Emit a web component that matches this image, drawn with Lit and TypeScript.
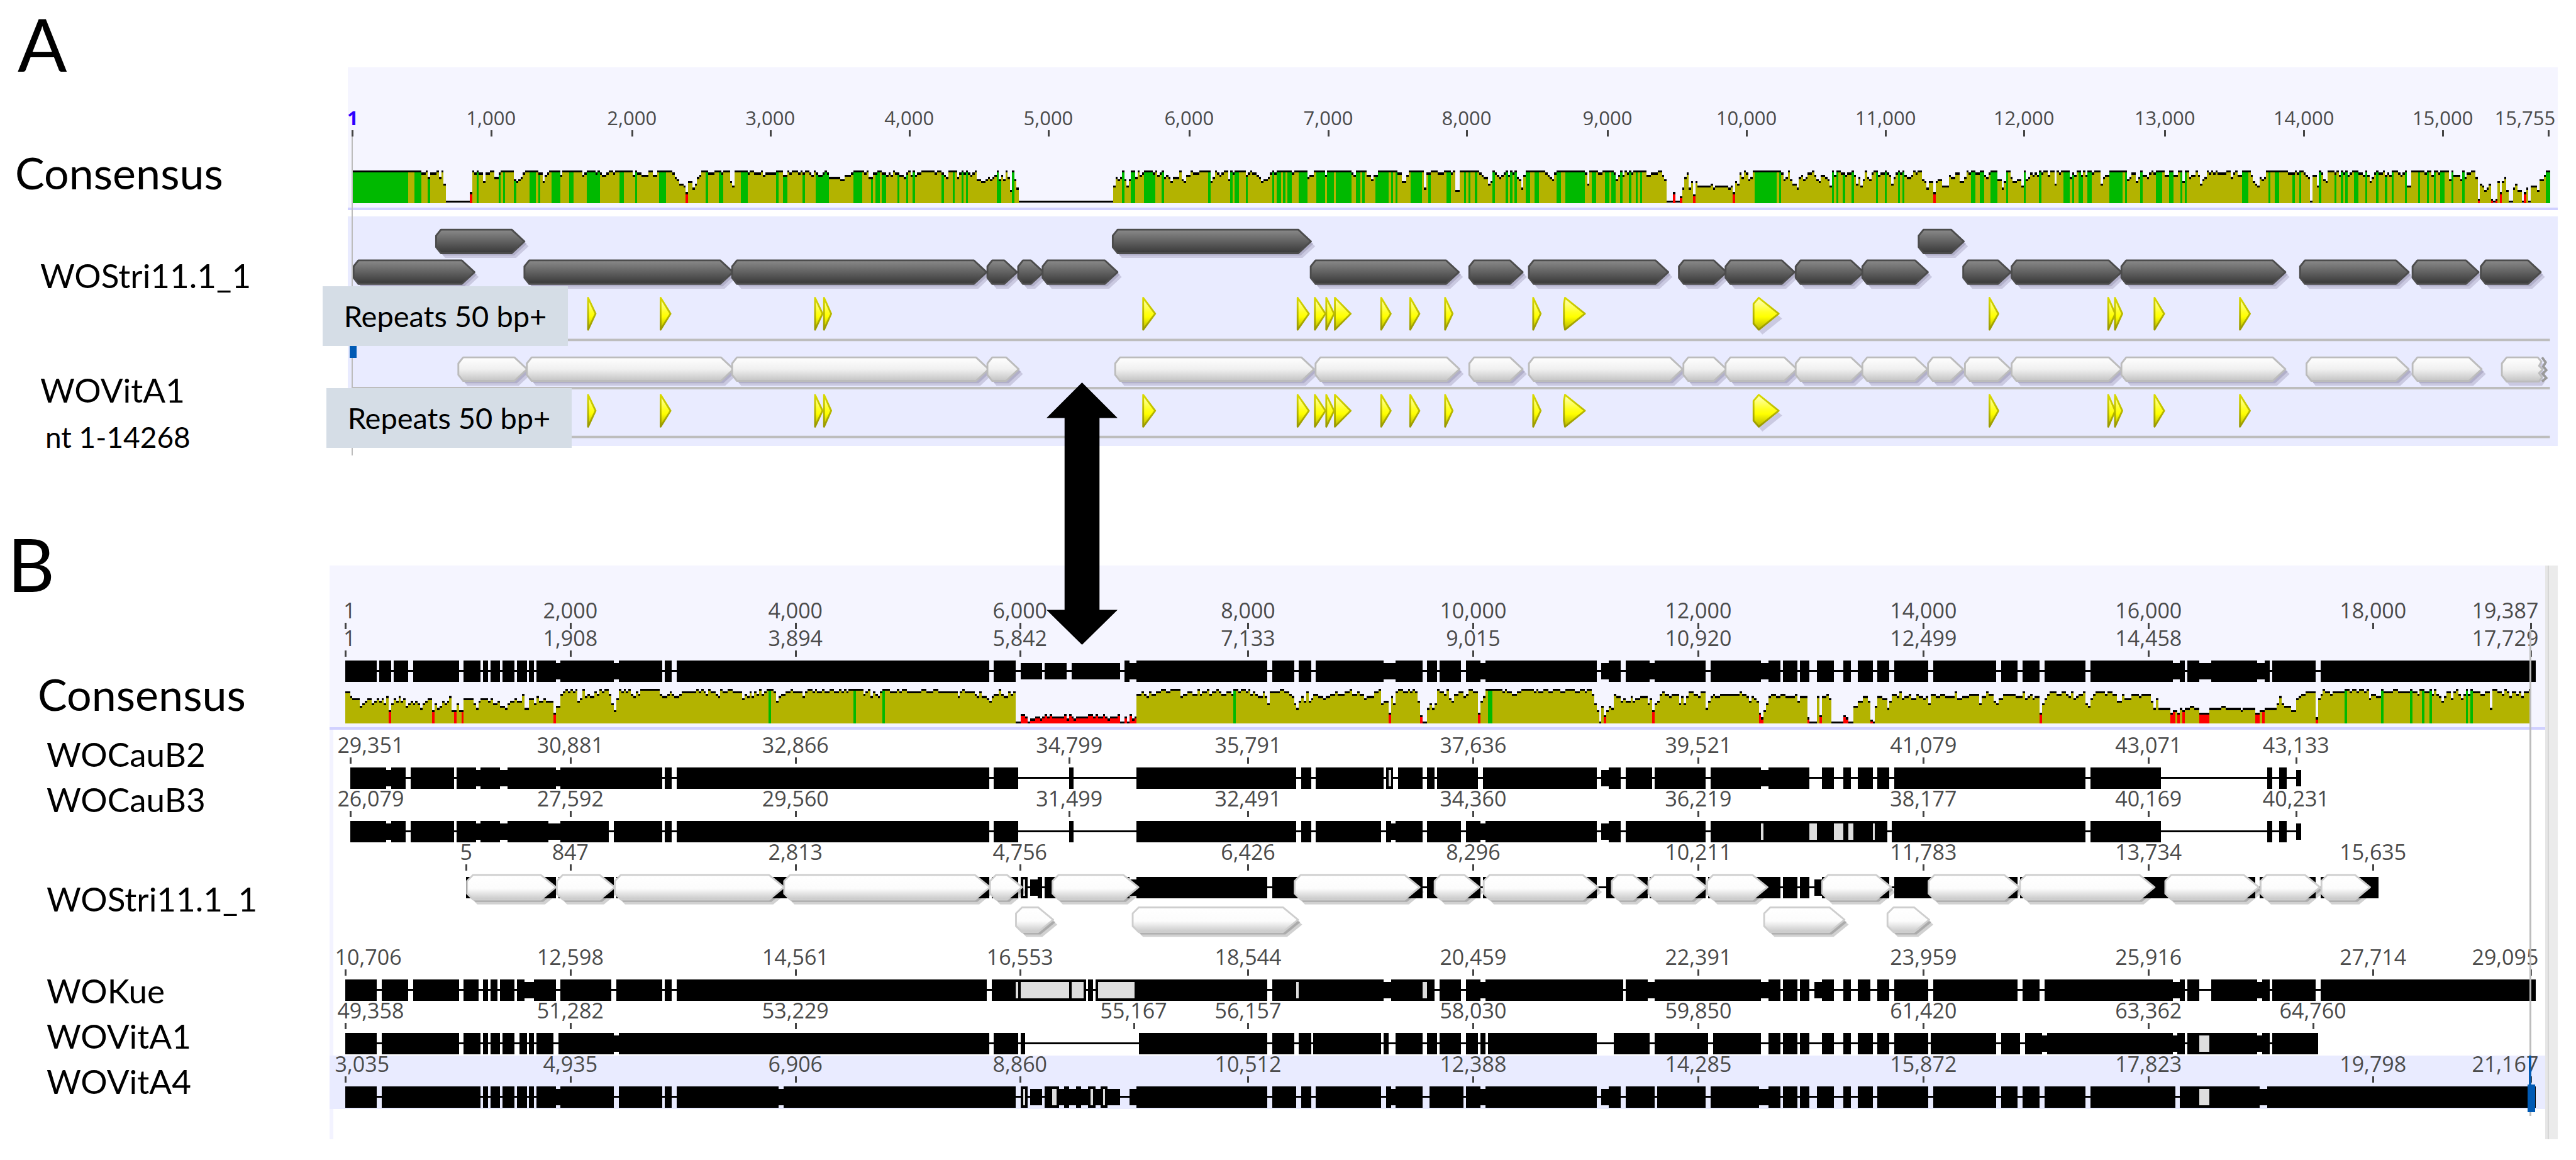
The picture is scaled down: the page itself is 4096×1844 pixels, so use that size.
import { LitElement, html, svg, css } from "lit";
import { customElement, property } from "lit/decorators.js";

type Span = [number, number];
type Tick = { at: number; text: string; start?: number; end?: number; strong?: boolean };
type Step = [number, number];

/* Features are listed window by window; a window has its own origin and pitch. */
const scan =
  (origin: number, pitch: number) =>
  (...spans: Span[]): Span[] =>
    spans.map(([a, b]) => [origin + a / pitch, origin + b / pitch]);

const steps =
  (origin: number, pitch: number) =>
  (text: string): Step[] =>
    text
      .trim()
      .split(/\s+/)
      .map((t) => {
        const [x, d] = t.split(":").map(Number);
        return [origin + x / pitch, d];
      });

const ticks = (xs: number[], texts: string[]): Tick[] => xs.map((at, i) => ({ at, text: texts[i] }));

const a0 = scan(0, 1.568);
const a1 = scan(900, 1.7422);
const a2 = scan(1750, 1.7422);
const a3 = scan(2600, 1.7422);
const a4 = scan(3400, 1.7818);
const b0 = scan(0, 1.568);
const b1 = scan(900, 1.7422);
const b2 = scan(1700, 1.7422);
const b3 = scan(2500, 1.7422);
const b4 = scan(3380, 1.7422);
const mid = scan(1680, 3);

/* ---------- panel A ---------- */

const A_LEFT = 578;
const A_WIDTH = 3672;

const A_TICKS: Tick[] = [
  { at: 585, text: "1", start: 577, strong: true },
  ...ticks(
    [816, 1050, 1280, 1511, 1742, 1976, 2207, 2437, 2671, 2902, 3133, 3363, 3597, 3828, 4059],
    ["1,000", "2,000", "3,000", "4,000", "5,000", "6,000", "7,000", "8,000", "9,000", "10,000", "11,000", "12,000", "13,000", "14,000", "15,000"],
  ),
  { at: 4234, text: "15,755", end: 4246 },
];

const A_PROFILE: Step[] = [
  ...steps(0, 1.568)(`920:0 1100:1 1107:0 1118:3 1123:1 1136:0 1142:3 1148:0 1153:6 1159:14 1222:10 1228:0 1235:1 1240:0
    1246:1 1256:5 1262:1 1275:0 1290:3 1297:1 1302:0 1308:1 1313:0 1340:4 1346:5 1352:4 1358:3 1364:1 1370:0 1404:1`),
  ...steps(900, 1.7422)(`0:1 6:5 12:2 18:1 25:0 57:2 63:0 115:2 121:4 127:1 130:0 153:1 160:0 166:1 172:0 178:2 185:1 192:0
    205:1 211:0 262:2 268:0 274:1 287:0 293:2 312:0 319:1 325:2 332:0 338:3 344:0 382:1 388:3 395:4 401:6 408:7 415:10
    421:6 427:5 434:8 440:6 447:3 453:5 459:2 465:0 484:1 498:0 517:1 523:0 542:5 549:7 555:1 561:0 593:1 600:0 606:1
    612:0 618:1 625:0 631:1 637:0 644:2 650:1 657:0 663:1 682:0 701:2 708:0 715:1 721:0 727:1 733:0 746:1 752:0 758:1
    765:0 772:1 784:2 790:0 797:1 803:2 810:0 816:1 822:0 829:1 835:3 842:0 848:3 861:4 874:0 880:2 893:7 899:1 905:0
    912:1 918:0 925:1 931:0 937:1 943:0 950:3 957:0 963:1 970:0 976:1 982:0 988:1 1001:2 1007:1 1014:2 1020:0 1026:1
    1039:2 1052:3 1058:1 1064:0 1071:2 1077:0 1083:2 1090:1 1103:0 1141:1 1147:0 1160:1 1166:2 1173:3 1179:0 1204:3
    1211:1 1217:0 1223:1 1230:0 1236:1 1242:2 1249:1 1255:0 1261:4 1274:5 1287:4 1293:3 1300:4 1306:3 1313:2 1319:0
    1325:4 1332:2 1338:4 1345:0 1351:3 1357:9 1364:0 1370:4 1376:8 1383:14`),
  ...steps(1750, 1.7422)(`0:14 177:7 183:3 190:4 196:3 202:0 209:4 215:7 221:4 228:0 241:3 247:0 253:2 260:1 266:0 291:1
    298:0 304:2 311:1 317:0 324:3 330:2 337:3 343:5 349:3 368:0 375:4 381:5 387:2 400:0 407:1 425:0 457:5 464:3 470:0
    476:1 483:2 490:1 496:0 503:3 509:4 515:0 522:1 528:0 560:2 566:1 573:0 579:1 590:2 597:3 604:5 611:4 624:3 630:1
    636:0 643:1 649:0 694:1 700:0 739:3 745:2 752:1 758:0 790:2 796:0 861:1 867:2 873:3 879:0 911:2 918:4 930:2 937:0
    1000:1 1007:3 1013:5 1020:6 1026:2 1032:0 1058:6 1064:0 1071:2 1077:8 1083:1 1090:0 1115:1 1134:0 1153:1 1160:0
    1166:9 1173:7 1179:0 1236:1 1243:2 1249:3 1256:4 1262:6 1268:5 1274:0 1280:1 1287:2 1294:3 1300:2 1306:1 1312:0
    1319:2 1325:0 1331:1 1338:0 1345:3 1351:4 1357:8 1364:2 1370:0 1425:1 1432:2 1438:3 1445:4 1451:1 1458:0`),
  ...steps(2600, 1.7422)(`0:0 61:1 67:6 74:0 95:1 112:0 144:1 150:4 157:2 163:0 169:2 176:0 182:1 188:0 195:1 201:0 240:2
    253:1 271:0 284:2 290:4 297:14 316:10 322:14 335:12 341:8 348:3 354:1 361:8 367:5 374:11 380:5 386:7 424:6 430:8
    437:7 475:8 482:7 488:10 495:5 501:6 508:1 514:3 520:0 527:1 533:4 539:3 546:0 629:1 635:4 641:3 647:0 654:4 660:6
    673:8 679:3 686:2 693:4 699:3 705:1 718:0 724:2 731:4 737:5 743:2 756:3 763:4 769:7 775:0 782:2 788:0 801:1 813:2
    820:1 833:0 840:2 845:6 852:3 858:7 864:4 870:0 876:3 883:4 890:1 896:0 909:2 915:1 928:0 935:1 941:2 948:6 954:3
    960:1 966:0 973:1 979:0 986:2 992:3 1005:2 1011:0 1017:1 1023:0 1036:4 1043:5 1050:8 1056:5 1069:10 1075:5 1082:4
    1094:7 1113:2 1119:3 1132:1 1145:5 1158:3 1164:0 1171:1 1177:0 1190:1 1203:0 1215:2 1222:3 1228:1 1234:0 1254:4
    1267:8 1273:5 1280:0 1287:1 1292:3 1299:5 1311:4 1324:7 1330:0 1336:4 1343:3 1349:1 1356:2 1362:1 1369:2 1375:0
    1381:1 1388:0 1400:2 1407:0 1420:6 1426:0 1432:1 1439:0 1464:3 1471:1 1477:2 1484:0 1496:2 1503:0 1510:2 1516:0
    1528:1 1535:0 1554:6 1560:1`),
  ...steps(3400, 1.7818)(`0:2 7:0 20:2 26:6 33:0 39:1 46:2 52:0 72:3 78:0 85:2 92:1 98:0 111:1 117:0 130:1 137:0 144:1
    150:0 163:6 170:3 176:2 189:0 242:4 248:3 254:1 268:5 274:3 280:0 287:2 300:3 307:1 313:0 320:1 326:0 352:2 365:0
    378:2 391:0 404:5 411:0 424:3 430:2 443:0 450:2 457:6 463:4 470:3 476:0 483:1 489:0 495:1 502:0 509:1 535:0 548:3
    555:1 561:0 568:2 581:0 607:2 614:5 620:6 627:7 633:3 640:4 646:3 653:0 718:1 737:0 744:1 750:0 763:1 770:2 776:3
    783:14 789:2 803:7 809:0 815:1 822:4 829:5 835:0 850:1 862:0 868:2 875:0 881:1 888:0 893:2 900:1 907:0 926:1 940:2
    946:0 952:2 959:5 965:3 972:1 979:0 985:1 998:0 1005:2 1011:1 1018:2 1024:0 1044:1 1050:2 1057:1 1063:0 1070:7
    1083:0 1122:1 1129:0 1141:2 1148:0 1161:1 1167:0 1193:4 1200:0 1206:2 1226:4 1232:0 1239:3 1246:1 1259:0 1272:3
    1278:13 1285:6 1291:7 1298:9 1304:8 1311:6 1317:13 1324:14 1330:13 1337:5 1343:10 1350:5 1356:3 1363:9 1370:14
    1383:8 1389:6 1395:9 1409:14 1415:10 1421:8 1428:14 1435:7 1454:9 1461:4 1474:2 1481:0`),
];

const A_GREEN: Span[] = [
  ...a0([920, 1062], [1083, 1096], [1113, 1119], [1240, 1246], [1301, 1307], [1313, 1318], [1325, 1330], [1337, 1343], [1382, 1394], [1400, 1406]),
  ...a1([31, 38], [44, 51], [70, 76], [82, 89], [102, 108], [133, 153], [159, 166], [223, 230], [235, 242], [268, 274], [287, 293], [344, 363],
    [478, 484], [504, 510], [516, 523], [580, 593], [606, 612], [682, 688], [701, 708], [727, 733], [758, 765], [791, 810], [816, 835], [874, 880],
    [905, 912], [918, 925], [956, 963], [969, 976], [988, 995], [1033, 1039], [1058, 1064], [1077, 1083], [1160, 1166], [1192, 1198], [1218, 1224],
    [1230, 1236], [1320, 1327], [1364, 1370]),
  ...a2([202, 209], [228, 241], [266, 294], [299, 305], [317, 324], [451, 458], [515, 522], [528, 535], [559, 566], [636, 643], [648, 662],
    [667, 674], [681, 688], [713, 739], [763, 790], [795, 815], [821, 861], [878, 892], [897, 904], [936, 950], [955, 974], [980, 987], [993, 1000],
    [1037, 1058], [1064, 1070], [1089, 1095], [1139, 1153], [1191, 1198], [1204, 1211], [1223, 1230], [1274, 1281], [1312, 1319], [1325, 1332],
    [1338, 1345], [1370, 1383], [1395, 1408], [1458, 1472], [1484, 1537]),
  ...a3([3, 55], [80, 93], [118, 131], [138, 145], [163, 170], [188, 195], [208, 214], [220, 227], [552, 617], [622, 629], [775, 782], [788, 794],
    [808, 814], [833, 840], [902, 909], [929, 936], [967, 973], [979, 986], [1176, 1190], [1202, 1216], [1233, 1254], [1279, 1286], [1330, 1336],
    [1375, 1382], [1444, 1464], [1470, 1477], [1490, 1502], [1515, 1528]),
  ...a4([52, 71], [78, 86], [98, 111], [123, 137], [189, 204], [208, 229], [235, 242], [280, 287], [326, 346], [365, 379], [398, 404], [411, 418],
    [581, 600], [658, 665], [678, 692], [731, 738], [750, 757], [809, 816], [853, 861], [873, 880], [887, 893], [912, 927], [946, 952], [978, 985],
    [1004, 1011], [1024, 1031], [1063, 1070], [1102, 1109], [1128, 1135], [1148, 1154], [1167, 1181], [1200, 1206], [1233, 1240], [1481, 1493]),
];

const A_RED: Span[] = [
  ...a0([1222, 1228]),
  ...a1([415, 421]),
  ...a3([316, 322], [335, 341], [374, 380], [488, 495], [1069, 1075]),
  ...a4([1278, 1285], [1317, 1324], [1330, 1337], [1343, 1350], [1415, 1421]),
];

const A_DARK_UPPER: Span[] = [...a0([1134, 1368]), ...a2([170, 748]), ...a3([1022, 1157])];
const A_DARK_LOWER: Span[] = [
  ...a0([919, 1238]),
  [870, 1219],
  ...a1([549, 1290], [1288, 1378], [1377, 1455]),
  [1731, 1858],
  ...a2([743, 1176], [1202, 1361]),
  [2539, 2773],
  ...a3([328, 470], [463, 667], [666, 867], [859, 1053], [1151, 1293]),
  [3341, 3526],
  ...a4([220, 710], [749, 1075], [1082, 1282], [1284, 1466]),
];
const A_LIGHT: Span[] = [
  ...a0([1192, 1375]),
  [874, 1220],
  ...a1([549, 1296], [1288, 1383]),
  ...a2([177, 757], [757, 1178], [1202, 1361]),
  [2539, 2797],
  ...a3([341, 470], [463, 674], [666, 867], [859, 1052], [1049, 1155], [1156, 1293]),
  [3341, 3526],
  ...a4([220, 710], [768, 1075], [1082, 1291]),
];
const A_TORN: Span = a4([1349, 1484])[0];
const A_REPEATS: Span[] = [
  ...a1([132, 158], [342, 375], [789, 815], [815, 840]),
  ...a2([258, 297], [705, 742], [755, 790], [788, 815], [813, 863], [947, 979], [1031, 1062], [1132, 1158], [1387, 1413], [1476, 1541]),
  ...a3([544, 621], [1227, 1257]),
  ...a4([181, 206], [201, 227], [318, 351], [571, 605]),
];

/* ---------- panel B ---------- */

const B_LEFT = 548;
const B_WIDTH = 3681;
const B_START = 574;
const B_PITCH = 4.0215;
const B_X = [948, 1322, 1695, 2074, 2448, 2822, 3196, 3570, 3943];
const B_END = 4205;
const TEXT_END = 4218;

const B_POSITION: Tick[] = [
  { at: B_START, text: "1", start: 571 },
  ...ticks(B_X, ["2,000", "4,000", "6,000", "8,000", "10,000", "12,000", "14,000", "16,000", "18,000"]),
  { at: B_END, text: "19,387", end: TEXT_END },
];
const B_CONSENSUS: Tick[] = [
  { at: B_START, text: "1", start: 571 },
  ...ticks(B_X.slice(0, 8), ["1,908", "3,894", "5,842", "7,133", "9,015", "10,920", "12,499", "14,458"]),
  { at: B_END, text: "17,729", end: TEXT_END },
];

const B_PROFILE: Step[] = [
  ...steps(0, 1.568)(`900:1 912:3 918:4 937:7 943:6 950:5 956:4 968:6 974:5 981:4 987:5 993:4 1000:6 1006:3 1012:9 1019:6
    1025:4 1031:5 1038:3 1044:5 1050:4 1056:7 1062:6 1068:5 1075:6 1081:5 1087:6 1093:8 1100:6 1106:5 1112:4 1127:9
    1133:6 1139:8 1145:7 1152:5 1158:6 1164:5 1171:3 1177:9 1190:6 1196:9 1209:4 1234:6 1240:8 1247:5 1253:4 1272:5
    1278:4 1285:6 1297:5 1303:7 1316:8 1322:6 1328:5 1340:4 1347:5 1359:2 1365:8 1378:4 1391:6 1397:3 1403:5 1409:4`),
  ...steps(900, 1.7422)(`0:5 7:4 14:5 35:10 42:7 56:2 63:1 70:0 77:1 84:0 91:1 98:0 105:5 112:4 119:0 126:3 133:2 140:3
    154:1 161:2 168:0 175:1 182:0 196:2 203:6 210:9 217:4 224:0 231:1 238:0 245:1 252:0 259:2 266:3 273:1 280:2 287:0
    343:2 350:3 364:2 371:1 378:2 385:3 399:2 406:1 448:0 455:1 462:0 469:1 476:2 483:0 490:1 504:2 511:3 518:0 525:1
    539:0 553:1 581:4 588:2 595:3 602:1 609:3 616:1 623:2 630:0 637:2 644:1 651:0 672:1 679:5 686:3 693:2 707:1 721:0
    728:1 756:3 763:1 770:0 784:1 791:0 798:1 812:0 819:1 833:0 847:1 861:0 868:1 875:0 882:1 889:0 931:2 938:1 945:0
    952:3 959:1 966:2 973:3 980:1 987:0 1008:1 1029:0 1036:1 1043:0 1057:1 1099:0 1113:1 1134:0 1148:1 1204:3 1211:1
    1218:0 1225:1 1253:2 1260:3 1267:1 1274:3 1288:4 1295:5 1302:3 1309:2 1323:0 1330:2 1337:3 1351:1 1358:2 1365:1`),
  ...steps(1680, 3)(`24:14 48:10.5 72:11.5 84:14 96:12.5 120:11.5 144:12.5 156:11.5 168:10.5 180:11.5 192:10.5 204:11.5
    264:10.5 276:12.5 288:10.5 300:11.5 312:12.5 324:11.5 384:10.5 408:11.5 420:10.5 432:11.5 456:10.5 468:11.5 480:12.5
    492:11.5 528:10.5 540:14 566:11.5 578:14 590:10.5 602:12.5 614:11.5 627:2`),
  ...steps(1700, 1.7422)(`343:1 350:2 357:3 364:1 371:2 385:1 399:0 413:1 427:0 455:3 462:2 476:1 490:2 504:0 511:2
    518:1 532:0 539:2 546:1 560:0 567:1 574:2 588:1 602:2 609:0 622:1 630:0 644:1 651:0 658:2 665:1 672:2 679:3 693:1
    700:3 707:6 714:1 742:0 756:1 770:2 777:3 784:6 791:8 798:5 805:3 812:5 819:1 826:5 833:4 840:2 854:3 868:4 875:3
    889:2 903:1 910:2 931:1 945:0 952:2 966:1 973:2 987:4 994:3 1015:1 1029:0 1036:6 1043:5 1057:10 1064:3 1071:6
    1078:1 1085:0 1099:1 1113:0 1120:1 1127:0 1134:1 1141:5 1148:11 1155:14 1170:8 1177:6 1184:8 1191:6 1198:0 1205:1
    1219:2 1226:0 1233:4 1240:5 1247:2 1261:1 1275:3 1282:2 1289:0 1303:1 1317:10 1324:5 1331:3 1338:0 1387:1 1394:0
    1401:1 1415:2 1429:1 1443:0 1478:1 1485:0 1492:1 1506:0 1520:1 1534:0`),
  ...steps(2500, 1.7422)(`0:0 21:1 77:2 84:1 91:0 105:1 119:0 161:1 175:0 203:1 217:0 231:1 238:0 252:2 259:6 266:9
    273:14 280:7 287:11 294:9 301:7 308:8 315:2 322:3 336:5 343:4 350:5 364:3 371:5 378:4 392:3 413:6 420:4 427:9 434:6
    441:5 448:2 455:1 462:2 476:3 483:2 504:6 511:3 518:6 525:3 532:1 546:2 560:3 567:1 581:8 588:5 595:3 602:2 609:3
    623:2 679:1 686:2 700:3 707:5 714:3 721:4 728:5 735:10 742:12 749:9 756:6 763:3 770:2 784:3 798:2 812:3 840:2
    847:5 854:3 875:12 882:14 903:3 910:11 917:3 931:2 938:4 945:14 980:11 987:12 994:14 1008:7 1022:5 1036:3 1050:5
    1057:13 1064:14 1071:7 1078:3 1092:4 1106:8 1113:5 1120:2 1134:3 1141:1 1148:4 1155:3 1169:2 1176:4 1190:2 1197:3
    1211:4 1218:3 1225:6 1232:2 1246:3 1260:2 1274:3 1302:1 1309:4 1323:3 1344:2 1372:6 1379:3 1393:1 1400:2 1414:5
    1421:6 1428:4 1442:2 1477:3 1498:1 1505:4 1512:3 1519:2 1526:4 1533:3 1547:10 1554:5`),
  ...steps(3380, 1.7422)(`0:4 14:9 21:6 28:4 35:2 42:1 63:2 77:1 91:2 98:3 105:1 112:4 119:3 126:2 140:1 147:6 154:7
    161:4 168:2 175:1 203:2 210:1 224:2 238:5 252:2 259:4 280:2 301:3 308:2 336:5 343:8 350:4 357:8 393:10 400:9 407:9
    414:10 421:8 428:9 435:8 449:7 463:8 477:10 505:8 540:7 554:8 596:9 603:8 638:10 652:9 659:9 666:8 700:6 707:3
    714:6 721:7 742:9 756:4 763:3 770:2 784:1 814:12 821:4 828:2 835:0 842:1 856:2 863:1 897:0 911:1 918:0 932:1 939:0
    953:1 960:0 967:4 974:2 988:3 1002:0 1009:1 1037:0 1051:1 1086:0 1093:1 1107:2 1114:0 1121:0 1128:1 1142:0 1149:2
    1156:0 1163:2 1170:3 1177:5 1184:3 1191:1 1205:4 1212:1 1219:0 1226:2 1233:4 1240:2 1247:0 1254:2 1261:0 1268:1
    1289:2 1303:1 1317:8 1324:0 1338:1 1352:2 1359:0 1366:1 1373:3 1380:1 1394:2 1401:1 1408:3 1415:1 1429:0 1436:2`),
];

const B_GREEN: Span[] = [
  ...b1([658, 665], [903, 910], [987, 994]),
  ...b2([609, 616], [1345, 1359]),
  ...b4([897, 904], [1002, 1009], [1086, 1093], [1121, 1128], [1142, 1149], [1247, 1254], [1261, 1268]),
];
const B_RED: Span[] = [
  ...b0([1012, 1019], [1127, 1133], [1184, 1190], [1203, 1209]),
  ...b1([35, 42]),
  ...mid([48, 627]),
  ...b2([1057, 1064], [1148, 1155], [1317, 1324]),
  ...b3([287, 294], [427, 434], [735, 749], [875, 882], [910, 917], [980, 994], [1057, 1064], [1547, 1554]),
  ...b4([393, 407], [414, 421], [428, 435], [477, 505], [638, 652], [659, 666], [814, 821]),
];

type Sequence = { span: Span; gaps: Span[]; thin: Span[]; pale: Span[] };

const LONG_GAP_LEFT: Span = [1691.5, 1776];
const LONG_GAP_RIGHT: Span = [1784, 1889];

const CONSENSUS: Sequence = {
  span: [574, 4213],
  gaps: [
    ...b0([983, 988], [1020, 1026], [1064, 1077], [1196, 1209], [1253, 1259], [1272, 1278], [1303, 1309], [1341, 1347], [1373, 1379], [1391, 1397]),
    ...b1([350, 356], [378, 392], [1295, 1309]),
    ...mid([24, 48], [156, 168], [276, 300], [542, 566]),
    ...b2([707, 721], [784, 798], [833, 847], [1155, 1170], [1197, 1204], [1268, 1282]),
    ...b3([267, 280], [336, 350], [581, 596], [799, 806], [847, 854], [883, 903], [953, 981], [1002, 1023], [1064, 1078], [1113, 1128],
      [1226, 1240], [1422, 1436], [1485, 1499], [1549, 1563]),
    ...b4([148, 162], [436, 443], [814, 828], [680, 687]),
  ],
  thin: [
    ...b0([1448, 1460]),
    ...b1([209, 224]),
    ...mid([48, 542], [590, 627]),
    ...b2([1043, 1078], [1323, 1338]),
    ...b3([280, 301], [420, 434], [742, 763]),
    ...b4([400, 421], [477, 512], [645, 666]),
  ],
  pale: [],
};

const CAU_B2: Sequence = {
  span: [582, 3823],
  gaps: [
    ...b0([1058, 1070], [1184, 1190]),
    ...b1([350, 356], [378, 392], [1295, 1309]),
    LONG_GAP_LEFT,
    LONG_GAP_RIGHT,
    ...b2([791, 805], [833, 847], [1044, 1051], [1071, 1085], [1155, 1170], [1190, 1198], [1316, 1331]),
    ...b3([267, 280], [336, 350], [428, 434], [581, 596], [883, 918], [953, 981], [1002, 1023], [1064, 1078], [1113, 1128]),
    ...b4([148, 162], [365, 673], [686, 708], [729, 758]),
  ],
  thin: [...b0([1007, 1019], [1240, 1253], [1303, 1322], [1448, 1460]), ...b3([280, 301], [742, 763]), ...b4([758, 771])],
  pale: [...b2([1057, 1064])],
};

const CAU_B3: Sequence = {
  span: [582, 3823],
  gaps: [
    ...b0([1058, 1070], [1184, 1190]),
    ...b1([196, 210], [350, 356], [378, 392], [1295, 1309]),
    LONG_GAP_LEFT,
    LONG_GAP_RIGHT,
    ...b2([791, 805], [833, 847], [1037, 1051], [1155, 1170], [1268, 1282]),
    ...b3([267, 280], [336, 350], [581, 596], [1106, 1121]),
    ...b4([148, 162], [365, 673], [686, 708], [729, 758]),
  ],
  thin: [
    ...b0([1007, 1019], [1240, 1253], [1303, 1322], [1429, 1460]),
    ...b2([1064, 1078], [1323, 1338]),
    ...b3([280, 301]),
    ...b4([758, 771]),
  ],
  pale: [...b3([742, 749], [883, 904], [953, 981], [995, 1009], [1064, 1071])],
};

const STRI: Sequence = {
  span: [775, 3951],
  gaps: [
    ...b0([1448, 1454]),
    ...b1([209, 216], [1295, 1302]),
    ...mid([36, 48], [84, 96], [156, 168]),
    ...b2([707, 721], [1155, 1170], [1323, 1331]),
    ...b3([267, 294], [413, 420], [581, 588], [799, 806], [847, 854], [883, 897], [1113, 1128], [1485, 1491]),
    ...b4([638, 652], [814, 828]),
  ],
  thin: [...mid([96, 132], [590, 627]), ...b3([897, 918])],
  pale: [...mid([60, 72])],
};

const KUE: Sequence = {
  span: [574, 4213],
  gaps: [
    ...b0([983, 995], [1064, 1077], [1196, 1209], [1247, 1259], [1272, 1278], [1297, 1303], [1341, 1347]),
    ...b1([42, 56], [203, 217], [350, 356], [378, 392], [1288, 1302]),
    ...mid([372, 384], [410, 422]),
    ...b2([707, 721], [1190, 1204], [1268, 1282]),
    ...b3([343, 350], [799, 806], [847, 854], [883, 897], [953, 981], [1002, 1023], [1058, 1078], [1113, 1128], [1226, 1240], [1485, 1499], [1549, 1563]),
    ...b4([436, 443], [477, 512], [680, 687], [814, 828]),
  ],
  thin: [
    ...b0([1366, 1391]),
    ...b2([1044, 1064], [1323, 1338]),
    ...b3([413, 434], [742, 763], [897, 918]),
    ...b4([400, 421], [645, 659]),
  ],
  pale: [...mid([24, 36], [48, 289], [301, 361], [434, 615]), ...b2([791, 798], [1155, 1170])],
};

const VIT_A1: Sequence = {
  span: [574, 3851],
  gaps: [
    ...b0([983, 995], [1196, 1209], [1253, 1259], [1272, 1278], [1303, 1309], [1341, 1354], [1373, 1379], [1391, 1397]),
    ...b1([35, 49], [1295, 1309]),
    ...mid([36, 48], [72, 639]),
    ...b2([707, 721], [784, 798], [833, 840], [1037, 1044], [1058, 1078], [1155, 1170], [1197, 1204], [1268, 1282], [1317, 1323], [1337, 1345]),
    ...b3([267, 315], [420, 434], [588, 603], [742, 763], [799, 806], [847, 854], [883, 918], [953, 981], [1002, 1023], [1064, 1078],
      [1113, 1128], [1226, 1232], [1422, 1436], [1491, 1505]),
    ...b4([436, 443], [680, 687]),
  ],
  thin: [...b1([209, 223]), ...b4([22, 36], [400, 414], [645, 659])],
  pale: [...b4([477, 505])],
};

const VIT_A4: Sequence = {
  span: [574, 4213],
  gaps: [
    ...b0([983, 995], [1253, 1259], [1272, 1278], [1303, 1309], [1341, 1347], [1373, 1379], [1391, 1397]),
    ...b1([209, 223], [350, 356], [378, 392]),
    ...mid([24, 48], [84, 96], [156, 168], [542, 590]),
    ...b2([707, 721], [791, 805], [833, 847], [1037, 1051], [1155, 1177], [1275, 1282]),
    ...b3([267, 280], [336, 350], [434, 441], [581, 596], [799, 806], [847, 854], [883, 903], [953, 981], [1002, 1023], [1064, 1078],
      [1226, 1240], [1422, 1436], [1485, 1499], [1549, 1563]),
    ...b4([148, 162], [407, 422]),
  ],
  thin: [
    ...b0([1448, 1460]),
    ...b1([686, 700]),
    ...mid([96, 156], [240, 265], [289, 325], [349, 385], [421, 445], [481, 542], [590, 627]),
    ...b2([1064, 1078], [1323, 1338]),
    ...b3([280, 301], [735, 763]),
    ...b4([652, 673]),
  ],
  pale: [...mid([60, 72], [204, 229], [397, 409], [457, 469]), ...b4([477, 505])],
};

const STRI_UPPER: Span[] = [
  [775, 925],
  ...b1([42, 214], [210, 704], [700, 1300], [1296, 1393]),
  ...b2([83, 336], [784, 1150], [1189, 1323]),
  [2464, 2656],
  ...b3([308, 417], [414, 587], [584, 763], [917, 1121], [1225, 1492]),
  [3355, 3581],
  ...b4([377, 652], [653, 829], [829, 974]),
];
const STRI_LOWER: Span[] = [...b1([1371, 1483]), ...b2([315, 798]), ...b3([749, 986], [1106, 1231])];

/* ---------- drawing helpers ---------- */

const rect = (x0: number, y0: number, x1: number, y1: number) => {
  const [l, t, r, b] = [x0, y0, x1, y1].map((v) => v.toFixed(2));
  return `M${l} ${t}H${r}V${b}H${l}z`;
};

const genePath = ([left, right]: Span, y: number, h: number, point = 21, cut = 8) => {
  const x0 = left + 1.5;
  const x1 = right - 1;
  const w = x1 - x0;
  const p = Math.min(point, w);
  const c = Math.min(cut, Math.max(0, w - p));
  const v = c === 0 ? 0 : 10;
  return `M${x0 + c} ${y}L${x1 - p} ${y}L${x1} ${y + h / 2}L${x1 - p} ${y + h}L${x0 + c} ${y + h}L${x0} ${y + h - v}L${x0} ${y + v}Z`;
};

const genes = (spans: Span[], y: number, h: number, kind: string, point = 21, cut = 8) =>
  spans.map((s) => {
    const d = genePath(s, y, h, point, cut);
    return svg`<path class="shade" d=${d} transform="translate(7 8)"></path>
      <path class="shade" d=${d} transform="translate(4 4)"></path>
      <path class=${"gene " + kind} fill=${`url(#${kind})`} d=${d}></path>`;
  });

const gradients = svg`<defs>
  <linearGradient id="dark" x1="0" y1="0" x2="0" y2="1"><stop offset="0" stop-color="#8a8a8a"/><stop offset="1" stop-color="#383838"/></linearGradient>
  <linearGradient id="light" x1="0" y1="0" x2="0" y2="1"><stop offset="0" stop-color="#ffffff"/><stop offset="0.5" stop-color="#f0f0f0"/><stop offset="1" stop-color="#c4c4c4"/></linearGradient>
  <linearGradient id="white" x1="0" y1="0" x2="0" y2="1"><stop offset="0" stop-color="#ffffff"/><stop offset="0.55" stop-color="#fcfcfc"/><stop offset="1" stop-color="#c8c8c8"/></linearGradient>
  <linearGradient id="repeat" x1="0" y1="0" x2="0" y2="1"><stop offset="0" stop-color="#ffffc8"/><stop offset="0.45" stop-color="#ffff20"/><stop offset="0.6" stop-color="#ffff00"/><stop offset="1" stop-color="#b4b400"/></linearGradient>
  <linearGradient id="rim" x1="0" y1="0" x2="0" y2="1"><stop offset="0" stop-color="#dada00"/><stop offset="1" stop-color="#989800"/></linearGradient>
</defs>`;

const inside = (x: number, spans: Span[]) => spans.some(([a, b]) => x >= a && x < b);

@customElement("tick-ruler")
export class TickRuler extends LitElement {
  @property({ attribute: false }) ticks: Tick[] = [];
  @property({ type: Number }) from = 0;
  @property({ type: Number }) extent = 1;

  static styles = css`
    :host {
      display: block;
      position: relative;
      height: 43px;
      font-family: "Open Sans", "Noto Sans", sans-serif;
      line-height: 26px;
      color: #4b4b4b;
      white-space: nowrap;
    }
    .text {
      position: absolute;
      top: 0;
      transform: translateX(-50%);
    }
    .start {
      transform: none;
    }
    .end {
      transform: translateX(-100%);
    }
    .strong {
      font-weight: 700;
      color: #2a00ff;
    }
    .mark {
      position: absolute;
      bottom: 0;
      width: 3px;
      height: 10px;
      margin-left: -1px;
      background: #444;
    }
  `;

  render() {
    const pct = (x: number) => `left:${(((x - this.from) / this.extent) * 100).toFixed(3)}%`;
    return this.ticks.map((t) => {
      const side = t.start !== undefined ? "start" : t.end !== undefined ? "end" : "";
      return html`<span class="text ${side} ${t.strong ? "strong" : ""}" style=${pct(t.start ?? t.end ?? t.at)}>${t.text}</span
        ><i class="mark" style=${pct(t.at)}></i>`;
    });
  }
}

@customElement("identity-plot")
export class IdentityPlot extends LitElement {
  @property({ attribute: false }) profile: Step[] = [];
  @property({ attribute: false }) green: Span[] = [];
  @property({ attribute: false }) red: Span[] = [];
  @property({ type: Number }) from = 0;
  @property({ type: Number }) extent = 1;
  @property({ type: Number }) start = 0;
  @property({ type: Number }) pitch = 1;
  @property({ type: Number }) columns = 0;
  @property({ type: Number }) level = 1;
  @property({ type: Number }) tall = 1;

  static styles = css`
    :host {
      display: block;
    }
    svg {
      display: block;
      width: 100%;
      height: 100%;
      shape-rendering: crispEdges;
    }
    .mid {
      fill: #b3b300;
    }
    .high {
      fill: #00b900;
    }
    .low {
      fill: #ff0000;
    }
    .cap {
      fill: #000;
    }
  `;

  render() {
    const d = { mid: "", high: "", low: "", cap: "" };
    const cap = 3.4;
    let k = 0;
    for (let i = 0; i < this.columns; i++) {
      const x = this.start + i * this.pitch;
      const next = this.start + (i + 1) * this.pitch;
      const c = x + this.pitch / 2;
      while (k + 1 < this.profile.length && this.profile[k + 1][0] <= c) k++;
      const depth = this.profile[k][1];
      const y = Math.min(depth * this.level, this.tall - cap);
      const kind = inside(c, this.red) ? "low" : inside(c, this.green) ? "high" : "mid";
      if (depth < 14) d[kind] += rect(x, y, next, this.tall);
      d.cap += rect(x, y, next, y + cap);
    }
    return html`<svg viewBox="${this.from} 0 ${this.extent} ${this.tall}" preserveAspectRatio="none" aria-hidden="true">
      <path class="mid" d=${d.mid}></path>
      <path class="high" d=${d.high}></path>
      <path class="low" d=${d.low}></path>
      <path class="cap" d=${d.cap}></path>
    </svg>`;
  }
}

@customElement("sequence-bar")
export class SequenceBar extends LitElement {
  @property({ attribute: false }) sequence!: Sequence;

  static styles = css`
    :host {
      display: block;
      height: 34px;
    }
    svg {
      display: block;
      width: 100%;
      height: 100%;
      shape-rendering: crispEdges;
    }
    .pale {
      fill: #dedede;
    }
  `;

  render() {
    const { span, gaps, thin, pale } = this.sequence;
    const snap = (x: number) => Math.round((x - B_START) / B_PITCH);
    const cols = (list: Span[]) => {
      const set = new Set<number>();
      for (const [a, b] of list) for (let i = snap(a); i < Math.max(snap(b), snap(a) + 1); i++) set.add(i);
      return set;
    };
    const gap = cols(gaps);
    const slim = cols(thin);
    const light = cols(pale);
    let solid = "";
    let grey = "";
    const kindOf = (i: number) => (gap.has(i) ? "gap" : slim.has(i) ? "slim" : light.has(i) ? "light" : "full");
    const last = snap(span[1]);
    for (let i = snap(span[0]); i < last; ) {
      const kind = kindOf(i);
      let j = i + 1;
      while (j < last && kindOf(j) === kind) j++;
      const x = B_START + i * B_PITCH;
      const end = B_START + j * B_PITCH;
      if (kind === "gap") solid += rect(x, 15, end, 19);
      else if (kind === "slim") solid += rect(x, 4, end, 31);
      else solid += rect(x, 0, end, 35);
      if (kind === "light") grey += rect(x, 4, end, 31);
      i = j;
    }
    return html`<svg viewBox="${B_LEFT} 0 ${B_WIDTH} 35" preserveAspectRatio="none" aria-hidden="true">
      <path d=${solid}></path>
      <path class="pale" d=${grey}></path>
    </svg>`;
  }
}

@customElement("app-root")
export class AppRoot extends LitElement {
  static styles = css`
    :host {
      display: block;
      background: #fff;
      color: #000;
      font-family: Lato, "Open Sans", sans-serif;
    }
    .figure {
      position: relative;
    }
    .panel {
      display: grid;
    }
    .panel-a {
      grid-template-columns: 553px 1fr 29px;
    }
    .panel-b {
      grid-template-columns: 524px 1fr 29px;
      margin-top: 106px;
    }
    .names {
      display: flex;
      flex-direction: column;
      white-space: nowrap;
    }
    .letter {
      margin: 0;
      font-size: 116px;
      font-weight: 400;
      line-height: 140px;
    }
    .consensus {
      font-size: 70px;
      line-height: 64px;
    }
    .name {
      font-size: 53px;
      line-height: 52px;
    }
    .note {
      font-size: 46px;
      line-height: 52px;
    }
    .panel-a .letter {
      padding-left: 28px;
    }
    .panel-a .consensus {
      margin-top: 102px;
      padding-left: 24px;
    }
    .panel-a .name {
      padding-left: 64px;
    }
    .panel-a .stri {
      margin-top: 106px;
    }
    .panel-a .vit {
      margin-top: 130px;
    }
    .panel-a .note {
      margin-top: 23px;
      padding-left: 72px;
    }
    .panel-b .letter {
      padding-left: 12px;
    }
    .panel-b .consensus {
      margin-top: 104px;
      padding-left: 60px;
    }
    .panel-b .name {
      margin-top: 20px;
      padding-left: 74px;
    }
    .panel-b .cau {
      margin-top: 38px;
    }
    .panel-b .stri {
      margin-top: 106px;
    }
    .panel-b .kue {
      margin-top: 94px;
    }

    .chart {
      position: relative;
      min-width: 0;
    }
    .panel-a .chart {
      margin-top: 107px;
    }
    .panel-a tick-ruler {
      font-size: 31px;
    }
    .panel-b tick-ruler {
      font-size: 34px;
    }
    .head {
      background: #f5f5ff;
      border-bottom: 4px solid #d0d0ff;
    }
    .panel-a .head {
      padding: 67px 0 7px;
    }
    .panel-a identity-plot {
      height: 52px;
      margin-top: 54px;
    }
    .tracks {
      display: block;
      width: 100%;
      height: 365px;
      margin-top: 10px;
      background: #e9ebff;
    }
    .shade {
      fill: #5a5078;
      fill-opacity: 0.22;
    }
    .gene-layer .shade {
      fill: #000;
      fill-opacity: 0.18;
    }
    .gene {
      stroke-width: 3;
      stroke-linejoin: round;
    }
    .dark {
      stroke: #4c4c4c;
    }
    .light {
      stroke: #bcbcbc;
    }
    .white {
      stroke: #cecece;
    }
    .repeat {
      stroke: url(#rim);
      stroke-width: 3;
      stroke-linejoin: round;
    }
    .guide {
      position: absolute;
      width: 2px;
      background: #bdbdbd;
    }
    .guide-a {
      left: 6px;
      top: 110px;
      bottom: -3px;
    }
    .caret-a {
      position: absolute;
      left: 3px;
      top: 430px;
      width: 11px;
      height: 32px;
      background: #005ab4;
    }
    .tag {
      position: absolute;
      width: 390px;
      height: 95px;
      background: #d5dde6;
      font-size: 47px;
      line-height: 95px;
      text-align: center;
      white-space: nowrap;
    }
    .tag-stri {
      left: -40px;
      top: 348px;
    }
    .tag-vit {
      left: -34px;
      top: 510px;
    }

    .panel-b .chart {
      display: grid;
      grid-template-columns: 1fr 20px;
      margin-top: 72px;
    }
    .panel-b .head {
      padding: 58px 0 6px;
    }
    .panel-b .head sequence-bar {
      margin-top: 6px;
    }
    .panel-b .head tick-ruler + tick-ruler {
      margin-top: 1px;
    }
    .panel-b identity-plot {
      height: 55px;
      margin-top: 11px;
    }
    .body {
      padding: 11px 0 48px;
      background: linear-gradient(to right, #f3f3ff 6px, #fff 6px);
    }
    .row {
      height: 85px;
    }
    .row sequence-bar {
      margin-top: 6px;
    }
    .row-genes {
      height: 167px;
    }
    .row-genes sequence-bar {
      margin-top: 10px;
    }
    .gene-layer {
      display: block;
      width: 100%;
      height: 110px;
      margin-top: -41px;
      position: relative;
    }
    .selected {
      background: #e9ebff;
    }
    .scrollbar {
      background: linear-gradient(to right, #e6e6e6 4px, #d6d6d6 4px, #d6d6d6 6px, #ebebeb 6px);
    }
    .guide-b {
      right: 42px;
      top: 101px;
      bottom: 37px;
      width: 3px;
    }
    .caret-line {
      position: absolute;
      right: 42px;
      bottom: 85px;
      width: 4px;
      height: 48px;
      background: #005ab4;
    }
    .caret-b {
      position: absolute;
      right: 36px;
      bottom: 43px;
      width: 12px;
      height: 44px;
      background: #005ab4;
    }
    .arrow {
      position: absolute;
      left: 40.625%;
      top: 608px;
      width: 113px;
      height: 417px;
    }
  `;

  private ruler(list: Tick[], from = B_LEFT, extent = B_WIDTH) {
    return html`<tick-ruler .ticks=${list} .from=${from} .extent=${extent}></tick-ruler>`;
  }

  private row(first: Tick, xs: number[], texts: string[], sequence: Sequence, end?: string, extra = "") {
    const list = [first, ...ticks(xs, texts)];
    if (end) list.push({ at: B_END, text: end, end: TEXT_END });
    return html`<div class="row ${extra}">${this.ruler(list)}<sequence-bar .sequence=${sequence}></sequence-bar></div>`;
  }

  private repeats(y: number) {
    const h = 53;
    return A_REPEATS.map((s) => {
      const w = s[1] - s[0];
      const point = w > 35 ? 33 : w;
      const d = genePath(s, y, h, point, 11);
      return svg`${w > 40 ? svg`<path class="shade" d=${d} transform="translate(6 8)"></path>` : ""}
        <path class="repeat" fill="url(#repeat)" d=${d}></path>`;
    });
  }

  private tracksA() {
    const [t0, t1] = A_TORN;
    const torn = `M${t0 + 8} 594L${t1 - 16} 594L${t1 - 10} 601L${t1 - 14} 608L${t1 - 8} 614L${t1 - 14} 620L${t1 - 9} 627L${t1 - 14} 634L${t0 + 8} 634L${t0} 624L${t0} 604Z`;
    const edge = `M${t1 - 9} 594L${t1 - 3} 602L${t1 - 7} 609L${t1 - 2} 615L${t1 - 8} 621L${t1 - 2} 628L${t1 - 9} 634`;
    return html`<svg class="tracks" viewBox="${A_LEFT} 360 ${A_WIDTH} 381" preserveAspectRatio="none" role="img" aria-label="Gene and repeat tracks">
      ${gradients}
      <path fill="#bdbdbd" d="M585 563h3652v4H585zM585 643h3652v4H585zM585 724h3652v4H585z"></path>
      ${genes(A_DARK_UPPER, 382, 39, "dark")} ${genes(A_DARK_LOWER, 433, 39, "dark")} ${genes(A_LIGHT, 594, 39, "light")}
      <path class="shade" d=${torn} transform="translate(5 7)"></path>
      <path class="gene light" fill="url(#light)" d=${torn}></path>
      <path d=${edge} fill="none" stroke="#9a9a9a" stroke-width="4"></path>
      ${this.repeats(495)} ${this.repeats(656)}
    </svg>`;
  }

  render() {
    return html`<main class="figure">
      <section class="panel panel-a">
        <div class="names">
          <h2 class="letter">A</h2>
          <span class="consensus">Consensus</span>
          <span class="name stri">WOStri11.1_1</span>
          <span class="name vit">WOVitA1</span>
          <span class="note">nt 1-14268</span>
        </div>
        <div class="chart">
          <div class="head">
            ${this.ruler(A_TICKS, A_LEFT, A_WIDTH)}
            <identity-plot
              .profile=${A_PROFILE}
              .green=${A_GREEN}
              .red=${A_RED}
              .from=${A_LEFT}
              .extent=${A_WIDTH}
              .start=${586.7}
              .pitch=${3.662}
              .columns=${997}
              .level=${3.6}
              .tall=${54.5}
            ></identity-plot>
          </div>
          ${this.tracksA()}
          <i class="guide guide-a"></i>
          <i class="caret-a"></i>
          <span class="tag tag-stri">Repeats 50 bp+</span>
          <span class="tag tag-vit">Repeats 50 bp+</span>
        </div>
      </section>

      <section class="panel panel-b">
        <div class="names">
          <h2 class="letter">B</h2>
          <span class="consensus">Consensus</span>
          <span class="name cau">WOCauB2</span>
          <span class="name">WOCauB3</span>
          <span class="name stri">WOStri11.1_1</span>
          <span class="name kue">WOKue</span>
          <span class="name">WOVitA1</span>
          <span class="name">WOVitA4</span>
        </div>
        <div class="chart">
          <div class="plot">
            <div class="head">
              ${this.ruler(B_POSITION)} ${this.ruler(B_CONSENSUS)}
              <sequence-bar .sequence=${CONSENSUS}></sequence-bar>
              <identity-plot
                .profile=${B_PROFILE}
                .green=${B_GREEN}
                .red=${B_RED}
                .from=${B_LEFT}
                .extent=${B_WIDTH}
                .start=${B_START}
                .pitch=${B_PITCH}
                .columns=${903}
                .level=${3.96}
                .tall=${57.5}
              ></identity-plot>
            </div>
            <div class="body">
              ${this.row(
                { at: 582, text: "29,351", start: 561 },
                [948, 1322, 1777, 2074, 2448, 2822, 3196, 3570, 3815],
                ["30,881", "32,866", "34,799", "35,791", "37,636", "39,521", "41,079", "43,071", "43,133"],
                CAU_B2,
              )}
              ${this.row(
                { at: 582, text: "26,079", start: 561 },
                [948, 1322, 1777, 2074, 2448, 2822, 3196, 3570, 3815],
                ["27,592", "29,560", "31,499", "32,491", "34,360", "36,219", "38,177", "40,169", "40,231"],
                CAU_B3,
              )}
              <div class="row row-genes">
                ${this.ruler(ticks([775, ...B_X], ["5", "847", "2,813", "4,756", "6,426", "8,296", "10,211", "11,783", "13,734", "15,635"]))}
                <sequence-bar .sequence=${STRI}></sequence-bar>
                <svg class="gene-layer" viewBox="${B_LEFT} 1449 ${B_WIDTH} 115" preserveAspectRatio="none" role="img" aria-label="WOStri11.1_1 genes">
                  ${gradients} ${genes(STRI_UPPER, 1453, 41, "white", 25, 10)} ${genes(STRI_LOWER, 1507, 41, "white", 25, 10)}
                </svg>
              </div>
              ${this.row(
                { at: B_START, text: "10,706", start: 557 },
                B_X,
                ["12,598", "14,561", "16,553", "18,544", "20,459", "22,391", "23,959", "25,916", "27,714"],
                KUE,
                "29,095",
              )}
              ${this.row(
                { at: B_START, text: "49,358", start: 561 },
                [948, 1322, 1884, 2074, 2448, 2822, 3196, 3570, 3843],
                ["51,282", "53,229", "55,167", "56,157", "58,030", "59,850", "61,420", "63,362", "64,760"],
                VIT_A1,
              )}
              ${this.row(
                { at: B_START, text: "3,035", start: 557 },
                B_X,
                ["4,935", "6,906", "8,860", "10,512", "12,388", "14,285", "15,872", "17,823", "19,798"],
                VIT_A4,
                "21,167",
                "selected",
              )}
            </div>
          </div>
          <div class="scrollbar"></div>
          <i class="guide guide-b"></i>
          <i class="caret-line"></i>
          <i class="caret-b"></i>
        </div>
      </section>

      <svg class="arrow" viewBox="0 0 118 436" preserveAspectRatio="none" aria-hidden="true">
        <path d="M59 0L118 59H88V378H118L59 436L0 378H30V59H0Z"></path>
      </svg>
    </main>`;
  }
}
